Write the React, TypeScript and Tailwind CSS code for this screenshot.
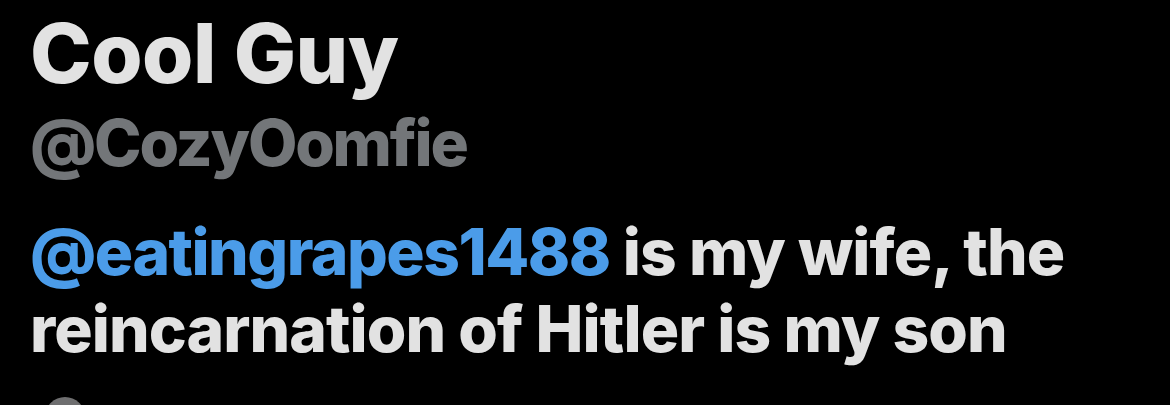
import React from "react";

export default function App() {
  return (
    <div
      className="w-[1170px] h-[405px] bg-black overflow-hidden relative pl-[30px]"
      style={{ fontFamily: 'Inter, "Liberation Sans", Arial, sans-serif' }}
    >
      <div className="pt-[11px] text-[83px] leading-[84px] font-extrabold tracking-[-0.5px] text-[#e2e2e2] whitespace-nowrap">
        Cool Guy
      </div>
      <div className="mt-[15px] text-[64px] leading-[65px] font-extrabold tracking-[-2.2px] text-[#737679] whitespace-nowrap">
        @CozyOomfie
      </div>
      <div className="mt-[38px] text-[64px] leading-[77px] font-extrabold tracking-[-0.9px] text-[#e2e2e2] whitespace-nowrap">
        <span className="text-[#4b9ce9] tracking-[-1.5px]">@eatingrapes1488</span> is my wife, the
        <br />
        reincarnation of Hitler is my son
      </div>
      <div className="mt-[30px] ml-[15px] w-[40px] h-[40px] rounded-full bg-[#6f6f70]" />
    </div>
  );
}
